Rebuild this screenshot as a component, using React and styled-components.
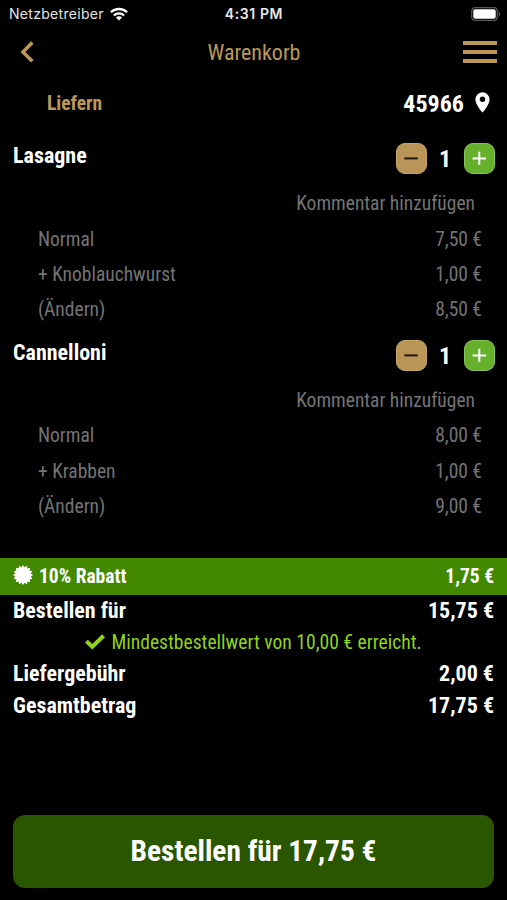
import styled, { createGlobalStyle } from 'styled-components';

const items = [
  {
    name: 'Lasagne',
    count: 1,
    lines: [
      ['Normal', '7,50 €'],
      ['+ Knoblauchwurst', '1,00 €'],
      ['(Ändern)', '8,50 €'],
    ],
  },
  {
    name: 'Cannelloni',
    count: 1,
    lines: [
      ['Normal', '8,00 €'],
      ['+ Krabben', '1,00 €'],
      ['(Ändern)', '9,00 €'],
    ],
  },
];

const WifiIcon = () => (
  <svg width="18" height="14" viewBox="0 0 18 14" fill="none" stroke="#fff" strokeWidth="2.3">
    <path d="M0.9 5.3a11.6 11.6 0 0 1 16.2 0" />
    <path d="M3.9 8.5a7.3 7.3 0 0 1 10.2 0" />
    <path d="M9 13.6L5.9 10.5a4.4 4.4 0 0 1 6.2 0z" fill="#fff" stroke="none" />
  </svg>
);

const BatteryIcon = () => (
  <svg width="30" height="14" viewBox="0 0 30 14">
    <rect x="0.7" y="0.7" width="25.6" height="12.6" rx="3.4" fill="none" stroke="#59595b" strokeWidth="1.3" />
    <rect x="2.3" y="2.3" width="22.4" height="9.4" rx="2" fill="#fff" />
    <path d="M27.8 4.8c1.8 0.7 1.8 3.7 0 4.4z" fill="#6b6b6d" />
  </svg>
);

const BackIcon = () => (
  <svg width="14" height="22" viewBox="0 0 14 22" fill="none" stroke="#bd9855" strokeWidth="3.6">
    <path d="M12.3 1.5L3 10.9l9.3 9.4" />
  </svg>
);

const PinIcon = () => (
  <svg width="15" height="21" viewBox="0 0 15 21">
    <path
      fill="#fff"
      fillRule="evenodd"
      d="M7.5 0.3A7.1 7.1 0 0 0 0.4 7.4C0.4 12.6 7.5 20.6 7.5 20.6S14.6 12.6 14.6 7.4A7.1 7.1 0 0 0 7.5 0.3zM7.5 4.6a2.7 2.7 0 1 1 0 5.4 2.7 2.7 0 0 1 0-5.4z"
    />
  </svg>
);

const MinusIcon = () => (
  <svg width="29" height="29" viewBox="0 0 29 29" stroke="#20180a" strokeWidth="2">
    <path d="M7.4 14.4h13.4" />
  </svg>
);

const PlusIcon = () => (
  <svg width="29" height="29" viewBox="0 0 29 29" stroke="#fff" strokeWidth="2">
    <path d="M7.6 14.4h13.4M14.3 7.7v13.4" />
  </svg>
);

const sealPoints = Array.from({ length: 32 }, (_, i) => {
  const r = i % 2 ? 8 : 10;
  const a = (i * Math.PI) / 16;
  return `${(10 + r * Math.sin(a)).toFixed(2)},${(10 - r * Math.cos(a)).toFixed(2)}`;
}).join(' ');

const SealIcon = () => (
  <svg width="20" height="20" viewBox="0 0 20 20">
    <polygon points={sealPoints} fill="#fff" />
  </svg>
);

const CheckIcon = () => (
  <svg width="20" height="16" viewBox="0 0 20 16" fill="none" stroke="#8fd31b" strokeWidth="4">
    <path d="M1.4 7.2l5.9 5.6L18.6 1.7" />
  </svg>
);

const App = () => {
  return (
    <Screen>
      <GlobalStyle />
      <StatusBar>
        <Carrier>
          Netzbetreiber
          <WifiIcon />
        </Carrier>
        <Clock>4:31 PM</Clock>
        <Battery>
          <BatteryIcon />
        </Battery>
      </StatusBar>
      <Header>
        <BackIcon />
        <Title>Warenkorb</Title>
        <MenuButton>
          <MenuLine />
          <MenuLine />
          <MenuLine />
        </MenuButton>
      </Header>
      <Delivery>
        <DeliveryType>Liefern</DeliveryType>
        <Zip>
          <span>45966</span>
          <PinIcon />
        </Zip>
      </Delivery>
      {items.map((item) => (
        <Item key={item.name}>
          <ItemHeader>
            <ItemName>{item.name}</ItemName>
            <Counter>
              <CounterButton>
                <MinusIcon />
              </CounterButton>
              <Count>{item.count}</Count>
              <CounterButton $add>
                <PlusIcon />
              </CounterButton>
            </Counter>
          </ItemHeader>
          <Comment>Kommentar hinzufügen</Comment>
          {item.lines.map(([label, price]) => (
            <ItemLine key={label}>
              <span>{label}</span>
              <span>{price}</span>
            </ItemLine>
          ))}
        </Item>
      ))}
      <Discount>
        <DiscountLabel>
          <SealIcon />
          <span>10% Rabatt</span>
        </DiscountLabel>
        <span>1,75 €</span>
      </Discount>
      <SumRow>
        <span>Bestellen für</span>
        <span>15,75 €</span>
      </SumRow>
      <MinimumOrder>
        <CheckIcon />
        <span>Mindestbestellwert von 10,00 € erreicht.</span>
      </MinimumOrder>
      <SumRow>
        <span>Liefergebühr</span>
        <span>2,00 €</span>
      </SumRow>
      <SumRow>
        <span>Gesamtbetrag</span>
        <span>17,75 €</span>
      </SumRow>
      <OrderButton>Bestellen für 17,75 €</OrderButton>
    </Screen>
  );
};

export default App;

const GlobalStyle = createGlobalStyle`
  * {
    box-sizing: border-box;
  }
  body {
    margin: 0;
    background: #000;
  }
  svg {
    display: block;
    flex: none;
  }
`;

const Screen = styled.div`
  display: flex;
  flex-direction: column;
  height: 900px;
  background: #000;
  color: #fff;
  font-family: 'Roboto Condensed', Roboto, sans-serif;
  font-stretch: 75%;
  white-space: nowrap;
  overflow: hidden;
`;
const StatusBar = styled.div`
  display: grid;
  grid-template-columns: 1fr auto 1fr;
  align-items: center;
  height: 27px;
  padding: 0 6px 0 9px;
  font-family: Inter, sans-serif;
  font-size: 14px;
  font-stretch: normal;
`;
const Carrier = styled.div`
  display: flex;
  align-items: center;
  gap: 6px;
  color: #e4e4e4;
  letter-spacing: 0.3px;
`;
const Clock = styled.div`
  padding-right: 2px;
  font-weight: 600;
  letter-spacing: 0.6px;
  color: #e8e8e8;
`;
const Battery = styled.div`
  display: flex;
  justify-content: flex-end;
`;

const Header = styled.div`
  display: grid;
  grid-template-columns: 1fr auto 1fr;
  align-items: center;
  height: 50px;
  padding: 0 10px 0 11px;
  > svg {
    margin-left: 9px;
  }
`;
const Title = styled.div`
  font-size: 22px;
  color: #bd9855;
`;
const MenuButton = styled.div`
  display: flex;
  flex-direction: column;
  justify-self: end;
  gap: 5px;
`;
const MenuLine = styled.div`
  width: 34px;
  height: 4px;
  background: #bd9855;
`;

const Delivery = styled.div`
  display: flex;
  align-items: center;
  justify-content: space-between;
  height: 54.5px;
  padding: 0 17px 3px 47px;
`;
const DeliveryType = styled.div`
  padding-top: 2px;
  font-size: 19.5px;
  font-weight: 700;
  color: #bd9855;
`;
const Zip = styled.div`
  display: flex;
  align-items: center;
  gap: 11px;
  font-size: 24px;
  font-weight: 700;
  span {
    padding-top: 2px;
  }
`;

const Item = styled.div`
  height: 196.8px;
`;
const ItemHeader = styled.div`
  display: flex;
  align-items: center;
  justify-content: space-between;
  height: 54.5px;
  padding: 0 12px 0 13px;
`;
const ItemName = styled.div`
  padding-bottom: 6px;
  font-size: 22px;
  font-weight: 700;
`;
const Counter = styled.div`
  display: flex;
  align-items: center;
`;
const CounterButton = styled.div`
  width: 31px;
  height: 31px;
  border: 1px solid ${({ $add }) => ($add ? '#84c559' : '#c8a463')};
  border-radius: 9px;
  background: ${({ $add }) => ($add ? '#67b02c' : '#b99657')};
`;
const Count = styled.div`
  width: 37px;
  padding-right: 1px;
  text-align: center;
  font-size: 24px;
  font-weight: 700;
`;
const Comment = styled.div`
  height: 35.5px;
  padding-right: 32px;
  line-height: 35.5px;
  text-align: right;
  font-size: 19.5px;
  color: #747474;
`;
const ItemLine = styled.div`
  display: flex;
  justify-content: space-between;
  height: 35.4px;
  padding: 0 25px 0 38px;
  line-height: 35.2px;
  font-size: 19.5px;
  color: #747474;
`;

const Discount = styled.div`
  display: flex;
  align-items: center;
  justify-content: space-between;
  height: 36.6px;
  margin-top: 32.9px;
  padding: 0 13px;
  background: #428900;
  font-size: 19.5px;
  font-weight: 700;
`;
const DiscountLabel = styled.div`
  display: flex;
  align-items: center;
  gap: 6px;
  svg {
    margin-bottom: 2px;
  }
`;
const SumRow = styled.div`
  display: flex;
  align-items: center;
  justify-content: space-between;
  height: 32.5px;
  padding: 0 13px;
  font-size: 22px;
  font-weight: 700;
`;
const MinimumOrder = styled.div`
  display: flex;
  align-items: center;
  justify-content: center;
  gap: 6px;
  height: 30px;
  font-size: 19.6px;
  color: #8fd31b;
  span {
    padding-top: 1px;
  }
`;
const OrderButton = styled.div`
  display: flex;
  align-items: center;
  justify-content: center;
  height: 73px;
  margin: auto 13px 12.5px;
  border-radius: 12px;
  background: #2b5600;
  font-size: 29.4px;
  font-weight: 700;
`;
